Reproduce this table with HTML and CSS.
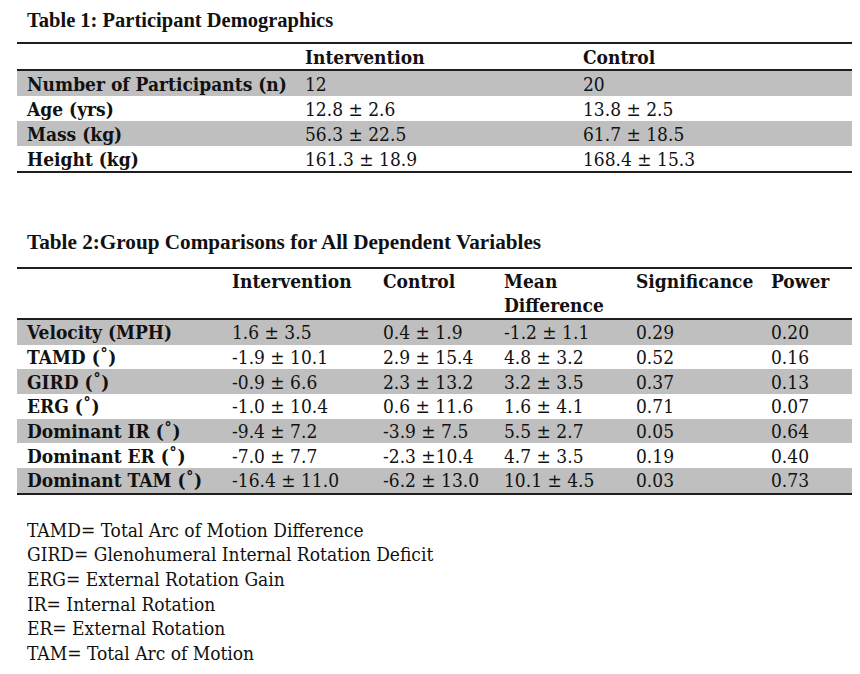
FILE: index.html
```html
<!DOCTYPE html>
<html>
<head>
<meta charset="utf-8">
<link rel="stylesheet" href="styles.css">
</head>
<body>
<div class="doc">
  <div class="title t1-title">Table 1: Participant Demographics</div>
  <div class="tbl t1">
    <div class="row head">
      <div class="c lab"></div><div class="c b">Intervention</div><div class="c b">Control</div>
    </div>
    <div class="row gray first"><div class="c b">Number of Participants (n)</div><div class="c">12</div><div class="c">20</div></div>
    <div class="row"><div class="c b">Age (yrs)</div><div class="c">12.8 ± 2.6</div><div class="c">13.8 ± 2.5</div></div>
    <div class="row gray"><div class="c b">Mass (kg)</div><div class="c">56.3 ± 22.5</div><div class="c">61.7 ± 18.5</div></div>
    <div class="row"><div class="c b">Height (kg)</div><div class="c">161.3 ± 18.9</div><div class="c">168.4 ± 15.3</div></div>
  </div>

  <div class="title t2-title">Table 2:Group Comparisons for All Dependent Variables</div>
  <div class="tbl t2">
    <div class="row head">
      <div class="c"></div><div class="c b">Intervention</div><div class="c b">Control</div><div class="c b">Mean<br>Difference</div><div class="c b">Significance</div><div class="c b">Power</div>
    </div>
    <div class="row gray first"><div class="c b">Velocity (MPH)</div><div class="c">1.6 ± 3.5</div><div class="c">0.4 ± 1.9</div><div class="c">-1.2 ± 1.1</div><div class="c">0.29</div><div class="c">0.20</div></div>
    <div class="row"><div class="c b">TAMD (˚)</div><div class="c">-1.9 ± 10.1</div><div class="c">2.9 ± 15.4</div><div class="c">4.8 ± 3.2</div><div class="c">0.52</div><div class="c">0.16</div></div>
    <div class="row gray"><div class="c b">GIRD (˚)</div><div class="c">-0.9 ± 6.6</div><div class="c">2.3 ± 13.2</div><div class="c">3.2 ± 3.5</div><div class="c">0.37</div><div class="c">0.13</div></div>
    <div class="row"><div class="c b">ERG (˚)</div><div class="c">-1.0 ± 10.4</div><div class="c">0.6 ± 11.6</div><div class="c">1.6 ± 4.1</div><div class="c">0.71</div><div class="c">0.07</div></div>
    <div class="row gray"><div class="c b">Dominant IR (˚)</div><div class="c">-9.4 ± 7.2</div><div class="c">-3.9 ± 7.5</div><div class="c">5.5 ± 2.7</div><div class="c">0.05</div><div class="c">0.64</div></div>
    <div class="row"><div class="c b">Dominant ER (˚)</div><div class="c">-7.0 ± 7.7</div><div class="c">-2.3 ±10.4</div><div class="c">4.7 ± 3.5</div><div class="c">0.19</div><div class="c">0.40</div></div>
    <div class="row gray"><div class="c b">Dominant TAM (˚)</div><div class="c">-16.4 ± 11.0</div><div class="c">-6.2 ± 13.0</div><div class="c">10.1 ± 4.5</div><div class="c">0.03</div><div class="c">0.73</div></div>
  </div>

  <div class="notes">
    <div>TAMD= Total Arc of Motion Difference</div>
    <div>GIRD= Glenohumeral Internal Rotation Deficit</div>
    <div>ERG= External Rotation Gain</div>
    <div>IR= Internal Rotation</div>
    <div>ER= External Rotation</div>
    <div>TAM= Total Arc of Motion</div>
  </div>
</div>
</body>
</html>
```

FILE: styles.css
```css
html, body {
  margin: 0;
  padding: 0;
  background: #ffffff;
}

.doc {
  width: 835px;
  padding-left: 17px;
  color: #111111;
  font-family: "DejaVu Serif", "Liberation Serif", serif;
  font-stretch: condensed;
  font-size: 19px;
}

.title {
  font-family: "Liberation Serif", "Times New Roman", serif;
  font-stretch: normal;
  font-weight: bold;
  font-size: 20.5px;
  line-height: 24px;
  height: 24px;
  padding-left: 10px;
}

.t1-title {
  padding-top: 8px;
  margin-bottom: 10px;
}

.t2-title {
  font-size: 21.2px;
  margin-top: 57px;
  margin-bottom: 13px;
}

.tbl {
  border-top: 2px solid #1e1e1e;
  border-bottom: 2px solid #1e1e1e;
}

.row {
  display: grid;
  padding-left: 10px;
  height: 25px;
  align-items: center;
  line-height: 24px;
  white-space: nowrap;
}

.t1 .row {
  grid-template-columns: 278px 278px 1fr;
}

.t2 .row {
  grid-template-columns: 205px 151px 121px 132px 135px 1fr;
  height: 24.7px;
}

.t2 .row.head {
  height: 49px;
  align-items: start;
}

.row.head {
  border-bottom: 2px solid #1e1e1e;
  height: 25px;
}

.gray {
  background: #bfbfbf;
}

.b {
  font-weight: bold;
}

.notes {
  margin-top: 23px;
  padding-left: 10px;
  line-height: 24.6px;
}
```
